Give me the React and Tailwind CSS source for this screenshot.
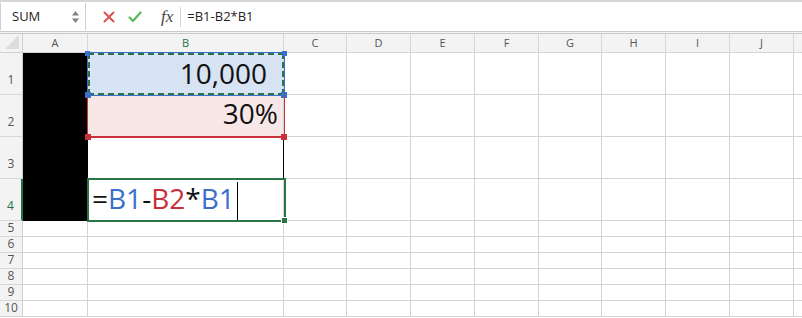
import React from 'react';

// --- Spreadsheet grid data ---
const columns = [
  { key: 'A', w: 'w-[65px]' },
  { key: 'B', w: 'w-[196px]' },
  { key: 'C', w: 'w-[63px]' },
  { key: 'D', w: 'w-[64px]' },
  { key: 'E', w: 'w-[64px]' },
  { key: 'F', w: 'w-[64px]' },
  { key: 'G', w: 'w-[63px]' },
  { key: 'H', w: 'w-[64px]' },
  { key: 'I', w: 'w-[64px]' },
  { key: 'J', w: 'w-[64px]' },
];

const rows = [
  { n: 1, h: 'h-[42px]', tall: true },
  { n: 2, h: 'h-[42px]', tall: true },
  { n: 3, h: 'h-[42px]', tall: true },
  { n: 4, h: 'h-[42px]', tall: true },
  { n: 5, h: 'h-[16px]' },
  { n: 6, h: 'h-[16px]' },
  { n: 7, h: 'h-[16px]' },
  { n: 8, h: 'h-[16px]' },
  { n: 9, h: 'h-[16px]' },
  { n: 10, h: 'h-[16px]' },
];

const font = { fontFamily: '"Open Sans", "Noto Sans", sans-serif' };

// --- Formula Bar ---
const FormulaBar = () => (
  <div className="flex h-[31px] border-t-2 border-[#d6d6d6] bg-white">
    {/* Name box */}
    <div className="flex w-[86px] items-center justify-between border-r border-[#cfcfcf] pl-[11px] pr-[5px] my-[1px] border-l">
      <span className="text-[13px] text-[#222]">SUM</span>
      <svg width="9" height="16" viewBox="0 0 9 16">
        <path d="M4.5 2 L8 6.5 L1 6.5 Z" fill="#808080" />
        <path d="M4.5 14 L8 9.5 L1 9.5 Z" fill="#808080" />
      </svg>
    </div>

    {/* Cancel / Enter / fx */}
    <div className="flex items-center pl-[17px]">
      <svg width="12" height="12" viewBox="0 0 12 12">
        <path d="M1.5 1.5 L10.5 10.5 M10.5 1.5 L1.5 10.5" stroke="#d9534f" strokeWidth="2" strokeLinecap="round" />
      </svg>
      <svg className="ml-[13px]" width="14" height="12" viewBox="0 0 14 12">
        <path d="M1.5 6.5 L5 10 L12.5 1.5" stroke="#5cb85c" strokeWidth="2.2" fill="none" strokeLinecap="round" strokeLinejoin="round" />
      </svg>
      <span
        className="ml-[19px] text-[17px] italic text-[#444]"
        style={{ fontFamily: '"Liberation Serif", "DejaVu Serif", serif' }}
      >
        fx
      </span>
      <div className="ml-[7px] h-[20px] w-px bg-[#d4d4d4]" />
      <span className="ml-[6px] text-[13px] text-[#222]">=B1-B2*B1</span>
    </div>
  </div>
);

// --- Column Header Row ---
const HeaderRow = () => (
  <div className="flex h-[22px] border-t-[3px] border-double border-[#c9c9c9] bg-[#f3f3f3]">
    <div className="relative w-[23px] shrink-0 border-r border-b border-[#d0d0d0]">
      <svg className="absolute right-[3px] bottom-[3px]" width="14" height="14" viewBox="0 0 14 14">
        <path d="M14 0 L14 14 L0 14 Z" fill="#dcdcdc" />
      </svg>
    </div>
    {columns.map((c) => (
      <div
        key={c.key}
        className={`${c.w} shrink-0 flex items-center justify-center border-r border-b border-[#d6d6d6] text-[11px] ${
          c.key === 'B' ? 'text-[#217346]' : 'text-[#555]'
        }`}
      >
        {c.key}
      </div>
    ))}
    <div className="flex-1 border-b border-[#d6d6d6]" />
  </div>
);

// --- Cell content ---
const cellContent = (row, col) => {
  if (col === 'B' && row === 1)
    return <span className="text-[28px] font-medium leading-none text-[#111] pr-[16px] pb-[7px]">10,000</span>;
  if (col === 'B' && row === 2)
    return <span className="text-[28px] font-medium leading-none text-[#111] pr-[5px] pb-[9px]">30%</span>;
  if (col === 'B' && row === 4)
    return (
      <div className="flex items-end w-full pl-[4px]">
        <span className="text-[28px] font-medium leading-none pb-[8px] text-[#111]">
          =<span className="text-[#3b6fc9]">B1</span>-<span className="text-[#c8303c]">B2</span>*
          <span className="text-[#3b6fc9]">B1</span>
        </span>
        <span className="ml-[2px] h-[38px] w-px bg-black" />
      </div>
    );
  return null;
};

const cellClass = (row, col) => {
  if (col === 'A' && row <= 4) return 'bg-black border-black';
  if (col === 'B' && row === 1) return 'bg-[#d7e2f3] border-[#d4d4d4] justify-end';
  if (col === 'B' && row === 2) return 'bg-[#f8e7e7] border-[#d4d4d4] justify-end';
  if (col === 'B' && row === 3) return 'border-b-[#d4d4d4] border-r-black';
  return 'border-[#d4d4d4]';
};

// --- Grid ---
const Grid = () => (
  <div className="relative">
    <HeaderRow />
    {rows.map((r) => (
      <div key={r.n} className={`flex ${r.h}`}>
        <div
          className={`w-[23px] shrink-0 flex items-end justify-center bg-[#f3f3f3] border-b border-[#d6d6d6] text-[12px] leading-none ${
            r.n === 4 ? 'border-r-2 border-r-[#217346] text-[#217346]' : 'border-r border-r-[#d0d0d0] text-[#555]'
          } ${r.tall ? 'pb-[8px]' : 'pb-[2px]'}`}
        >
          {r.n}
        </div>
        {columns.map((c) => (
          <div key={c.key} className={`${c.w} shrink-0 flex items-end border-r border-b ${cellClass(r.n, c.key)}`}>
            {cellContent(r.n, c.key)}
          </div>
        ))}
        <div className="flex-1 border-b border-[#d4d4d4]" />
      </div>
    ))}

    {/* B1 range finder (blue) with copy marquee (green dashes) */}
    <div className="absolute left-[87px] top-[21px] h-[44px] w-[198px] border border-[#3b6fc9]">
      <div className="h-full w-full border-2 border-dashed border-[#2a7548]" />
    </div>
    <div className="absolute left-[85px] top-[20px] h-[5px] w-[5px] bg-[#3b6fc9]" />
    <div className="absolute left-[282px] top-[20px] h-[5px] w-[5px] bg-[#3b6fc9]" />
    <div className="absolute left-[85px] top-[61px] h-[6px] w-[6px] bg-[#3b6fc9]" />
    <div className="absolute left-[281px] top-[61px] h-[6px] w-[6px] bg-[#3b6fc9]" />

    {/* B2 range finder (red) */}
    <div className="absolute left-[87px] top-[66px] h-[41px] w-[198px] border-x border-b-2 border-[#c8303c]" />
    <div className="absolute left-[85px] top-[103px] h-[6px] w-[6px] bg-[#c8303c]" />
    <div className="absolute left-[281px] top-[103px] h-[6px] w-[6px] bg-[#c8303c]" />

    {/* Active cell B4 */}
    <div className="absolute left-[87px] top-[147px] h-[44px] w-[199px] border-2 border-[#2a7548]" />
    <div className="absolute left-[281px] top-[186px] h-[7px] w-[7px] border border-white bg-[#2a7548]" />
  </div>
);

export default function App() {
  return (
    <div className="h-[318px] w-[802px] overflow-hidden bg-white" style={font}>
      <FormulaBar />
      <Grid />
    </div>
  );
}
